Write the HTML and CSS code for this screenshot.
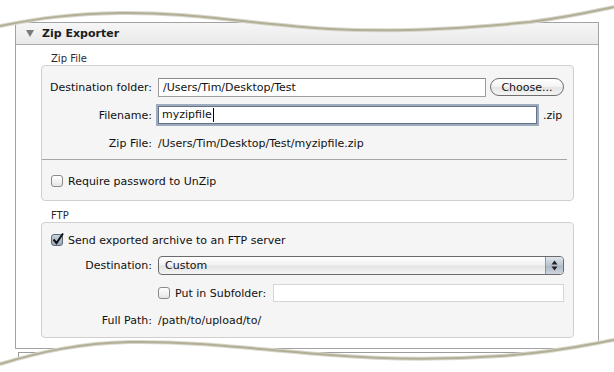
FILE: index.html
```html
<!DOCTYPE html>
<html lang="en">
<head>
    <meta charset="UTF-8">
    <title>Zip Exporter</title>
    <link rel="stylesheet" href="styles.css">
</head>
<body>
    <div class="stage">
        <div class="panel">
            <div class="panel-head">
                <span class="disclosure"></span>
                <span class="panel-title">Zip Exporter</span>
            </div>

            <div class="panel-body">
                <div class="caption">Zip File</div>
                <div class="group">
                    <div class="row row-first">
                        <label class="lbl" for="dest">Destination folder:</label>
                        <input class="field" type="text" id="dest" value="/Users/Tim/Desktop/Test">
                        <button class="pill">Choose...</button>
                    </div>
                    <div class="row row-name">
                        <label class="lbl" for="fname">Filename:</label>
                        <div class="field focused"><span class="caret">myzipfile</span></div>
                        <span class="suffix">.zip</span>
                    </div>
                    <div class="row row-text">
                        <span class="lbl">Zip File:</span>
                        <span class="value">/Users/Tim/Desktop/Test/myzipfile.zip</span>
                    </div>
                    <div class="sep"></div>
                    <div class="row row-check">
                        <span class="box"></span>
                        <span>Require password to UnZip</span>
                    </div>
                </div>

                <div class="caption caption-ftp">FTP</div>
                <div class="group">
                    <div class="row row-send">
                        <span class="box checked">
                            <svg width="14" height="14" viewBox="0 0 14 14"><path d="M2.5 7.5 L5.5 11 L12 1.5" fill="none" stroke="#111" stroke-width="2"/></svg>
                        </span>
                        <span>Send exported archive to an FTP server</span>
                    </div>
                    <div class="row row-dest">
                        <span class="lbl">Destination:</span>
                        <div class="popup">
                            <span class="popup-text">Custom</span>
                            <span class="popup-arrows">
                                <svg width="7" height="11" viewBox="0 0 7 11"><path d="M3.5 0.5 L6.5 4.5 L0.5 4.5 Z M0.5 6.5 L6.5 6.5 L3.5 10.5 Z" fill="#222"/></svg>
                            </span>
                        </div>
                    </div>
                    <div class="row row-sub">
                        <span class="lbl"></span>
                        <span class="box"></span>
                        <span class="sub-label">Put in Subfolder:</span>
                        <div class="field plain"></div>
                    </div>
                    <div class="row row-path">
                        <span class="lbl">Full Path:</span>
                        <span class="value">/path/to/upload/to/</span>
                    </div>
                </div>
            </div>
        </div>
        <div class="panel next"></div>

        <!-- torn edges laid over the capture -->
        <svg class="torn" width="614" height="372" viewBox="0 0 614 372">
            <path d="M0 0 L0 26 C40 18 70 14 120 13 C190 12 250 24 330 29 C400 33 470 28 530 22 C570 17 595 11 614 7 L614 0 Z" fill="#fff"/>
            <path d="M0 26 C40 18 70 14 120 13 C190 12 250 24 330 29 C400 33 470 28 530 22 C570 17 595 11 614 7" fill="none" stroke="#d9d7cb" stroke-width="4"/>
            <path d="M0 26 C40 18 70 14 120 13 C190 12 250 24 330 29 C400 33 470 28 530 22 C570 17 595 11 614 7" fill="none" stroke="#b3af97" stroke-width="2"/>

            <path d="M0 372 L0 364 C40 352 80 343 130 342 C200 341 260 350 330 355 C380 359 440 360 500 356 C560 352 590 344 614 340 L614 372 Z" fill="#fff"/>
            <path d="M0 364 C40 352 80 343 130 342 C200 341 260 350 330 355 C380 359 440 360 500 356 C560 352 590 344 614 340" fill="none" stroke="#d9d7cb" stroke-width="4"/>
            <path d="M0 364 C40 352 80 343 130 342 C200 341 260 350 330 355 C380 359 440 360 500 356 C560 352 590 344 614 340" fill="none" stroke="#b3af97" stroke-width="2"/>
        </svg>
    </div>
</body>
</html>
```

FILE: styles.css
```css
body {
    margin: 0;
    background: #fff;
    font-family: 'DejaVu Sans', sans-serif;
    font-size: 11px;
    color: #111;
}

.stage {
    position: relative;
    width: 614px;
    height: 372px;
    overflow: hidden;
    padding-top: 22px;
    box-sizing: border-box;
}

.panel {
    margin-left: 15px;
    width: 584px;
    box-sizing: border-box;
    border: 1px solid #a3a3a3;
    background: #fff;
}

.panel.next {
    margin-top: 3px;
    margin-left: 18px;
    width: 581px;
    height: 30px;
    border-color: #9c9c9c;
}

.panel-head {
    height: 21px;
    display: flex;
    align-items: center;
    padding-left: 10px;
    background: linear-gradient(#f6f6f6, #e9e9e9);
    border-bottom: 1px solid #ababab;
}

.disclosure {
    width: 0;
    height: 0;
    border-left: 4px solid transparent;
    border-right: 4px solid transparent;
    border-top: 7px solid #7a7a7a;
    margin-right: 8px;
}

.panel-title {
    font-weight: bold;
    color: #1c1c1c;
}

.panel-body {
    padding: 7px 24px 10px 25px;
}

.caption {
    font-size: 10px;
    line-height: 13px;
    padding-left: 10px;
    color: #2a2a2a;
}

.caption-ftp {
    margin-top: 8px;
}

.group {
    border: 1px solid #d0d0d0;
    border-radius: 4px;
    background: #f5f5f5;
    padding: 10px 9px 10px 0;
}

.group + .caption + .group {
    padding-top: 8px;
    padding-bottom: 8px;
}

.row {
    display: flex;
    align-items: center;
    height: 18px;
    white-space: nowrap;
}

.lbl {
    flex: none;
    width: 110px;
    margin-right: 6px;
    text-align: right;
}

.row-first {
    height: 22px;
}

.row-name {
    height: 22px;
    margin-top: 6px;
}

.row-text {
    margin-top: 8px;
}

.sep {
    margin: 7px -3px 0 0;
    height: 1px;
    background: #a6a6a6;
}

.row-check {
    margin-top: 12px;
    padding-left: 9px;
}

.row-send {
    padding-left: 9px;
}

.row-dest {
    height: 19px;
    margin-top: 7px;
}

.row-sub {
    margin-top: 9px;
}

.row-path {
    margin-top: 9px;
}

.field {
    flex: 1;
    min-width: 0;
    height: 19px;
    box-sizing: border-box;
    border: 1px solid #9d9d9d;
    border-top-color: #8a8a8a;
    background: #fff;
    font-family: inherit;
    font-size: 11px;
    padding: 0 4px;
    margin: 0;
    color: #111;
    outline: none;
}

.field.focused {
    height: 18px;
    border-color: #65738a;
    box-shadow: 0 0 0 2px #9eabbc;
    display: flex;
    align-items: center;
    padding-left: 3px;
}

.caret {
    border-right: 1px solid #000;
    padding-right: 1px;
    line-height: 14px;
}

.field.plain {
    height: 18px;
    border-color: #d6d6d6;
    margin-left: 7px;
}

.suffix {
    flex: none;
    width: 21px;
    margin-left: 6px;
}

.pill {
    flex: none;
    width: 74px;
    height: 18px;
    margin-left: 4px;
    border: 1px solid #6f6f6f;
    border-radius: 9px;
    background: linear-gradient(#ffffff, #f3f3f3 50%, #e4e4e4 51%, #f4f4f4);
    font-family: inherit;
    font-size: 11px;
    color: #111;
    padding: 0;
}

.box {
    flex: none;
    position: relative;
    width: 12px;
    height: 12px;
    box-sizing: border-box;
    border: 1px solid #8a8a8a;
    border-radius: 3px;
    background: linear-gradient(#ffffff, #e6e6e6);
    margin-right: 5px;
}

.box.checked {
    background: linear-gradient(#c7d1dc, #9aa9ba);
    border-color: #5e6a78;
}

.box.checked svg {
    position: absolute;
    left: -1px;
    top: -3px;
}

.sub-label {
    flex: none;
}

.popup {
    flex: 1;
    height: 19px;
    box-sizing: border-box;
    display: flex;
    align-items: center;
    border: 1px solid #6b6b6b;
    border-radius: 4px;
    background: linear-gradient(#ffffff, #f2f2f2 45%, #e3e3e3 55%, #f5f5f5);
    overflow: hidden;
}

.popup-text {
    flex: 1;
    padding-left: 6px;
}

.popup-arrows {
    flex: none;
    width: 17px;
    height: 100%;
    display: flex;
    align-items: center;
    justify-content: center;
    border-left: 1px solid #8d96a2;
    background: linear-gradient(#dfe6ee, #b8c3cf 50%, #aab6c4 51%, #cdd6e0);
}

.torn {
    position: absolute;
    left: 0;
    top: 0;
}
```
